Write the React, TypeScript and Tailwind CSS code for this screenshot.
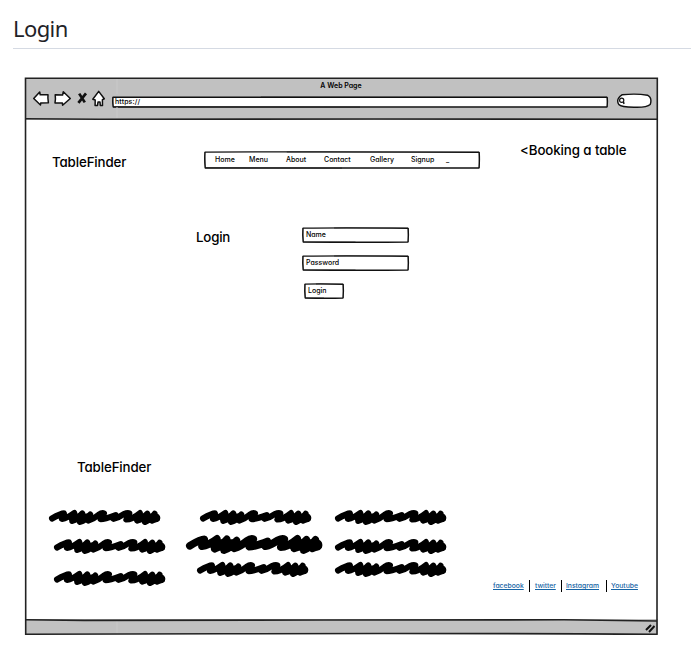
import type { ReactNode } from "react";

function SketchBox({ className, w, h, children }: { className: string; w: number; h: number; children?: ReactNode }) {
  return (
    <div className={`relative shrink-0 ${className}`}>
      <svg className="absolute inset-0 h-full w-full overflow-visible" viewBox={`0 0 ${w} ${h}`} fill="#fff" stroke="#111" strokeLinejoin="round">
        <path strokeWidth="1.3" d={`M1 1.2 Q${w * 0.4} .5 ${w - 0.8} 1.3 Q${w - 0.2} ${h / 2} ${w - 1} ${h - 1} Q${w * 0.6} ${h - 0.5} 1.2 ${h - 1} Q.3 ${h / 2} 1 1.2Z`} />
        <path fill="none" strokeWidth=".7" d={`M.8 1 L1.3 ${h - 1.2} L${w * 0.5} ${h - 0.9} M${w * 0.3} 1 L${w - 1} .9 L${w - 0.7} ${h - 1}`} />
      </svg>
      <div className="relative flex h-full items-center">{children}</div>
    </div>
  );
}

function Scribble({ className }: { className: string }) {
  return (
    <svg className={`block shrink-0 overflow-visible ${className}`} viewBox="87 180 333 44" preserveAspectRatio="none" fill="none" stroke="#000" strokeWidth="18" strokeLinecap="round" strokeLinejoin="round">
      <path d="M96 205 Q122 190 132 190 Q133 193 126 206 Q142 204 163 189 L157 212 Q170 208 187 190 L180 215 Q196 210 211 193 L205 211 Q222 206 236 194 Q246 187 252 190 L242 207 Q254 207 287 195 L281 206 Q296 203 312 192 Q323 187 328 190 L319 208 Q336 208 360 189 L352 211 Q366 207 382 191 L375 215 Q389 211 404 191 L396 211 L411 205" />
      <path d="M158 203H209M352 203H408" strokeWidth="26" />
    </svg>
  );
}

const navItems = [
  { label: "Home", box: "w-[34px]" },
  { label: "Menu", box: "w-[37px]" },
  { label: "About", box: "w-[38px]" },
  { label: "Contact", box: "w-[46px]" },
  { label: "Gallery", box: "w-[41px]" },
  { label: "Signup", box: "w-[35px]" },
  { label: "_", box: "w-[8px]" },
];

function Toolbar() {
  return (
    <div className="h-[42px] bg-[#c1c1c1] pt-[4px]">
      <div className="pr-px text-center text-[7px] leading-[7px] font-semibold">A Web Page</div>
      <div className="flex h-[20px] items-center pl-[7px]">
        <svg className="h-[20px] w-[76px] shrink-0" viewBox="32 89 76 20" fill="#fff" stroke="#111" strokeWidth="1.5" strokeLinejoin="round">
          <path d="M33.7 98.5 39.7 92 40.2 94.8 48 94.7 Q47.6 98 48.4 102.8 L40.7 103 40.5 105Z" />
          <path d="M70.3 98.5 63.3 91.7 62.6 95 55.2 94.8 Q55.8 99 55 102.9 L62.4 103.1 62.6 105.2Z" />
          <path d="M98.7 91.4 92.8 99.2 95.2 100 95.1 105.4 97.5 105.5 98 102 100 102 100.3 105.5 102.5 105.4 102.4 99.7 104.3 98.8Z" />
          <path d="M79.2 93.6 84.8 102.4M86 93.3 78.4 102.8" fill="none" strokeWidth="2.7" />
        </svg>
        <SketchBox className="mt-[5px] ml-[4px] h-[12px] w-[496px]" w={496} h={12}>
          <span className="pt-px pl-[3px] text-[7px] leading-[8px] font-medium tracking-[0.12px]">https://</span>
        </SketchBox>
        <svg className="mt-[3px] ml-[8px] h-[15px] w-[36px] shrink-0" viewBox="616 93 36 15" fill="#fff" stroke="#111" strokeWidth="1.4">
          <path d="M622 94.8 Q636 93.2 647.5 95.2 Q652.5 98 650.2 104.5 Q647 107.5 635 107.2 Q621 107.3 618.8 104.5 Q615.5 99 622 94.8Z" />
          <circle cx="621.7" cy="100.2" r="2.1" strokeWidth="1.2" />
          <path d="m623.3 101.9.8 2" strokeWidth="1.5" />
        </svg>
      </div>
    </div>
  );
}

function Field({ label, className, w, h }: { label: string; className: string; w: number; h: number }) {
  return (
    <SketchBox className={className} w={w} h={h}>
      <span className="pl-[4px] text-[7px] leading-[8px] font-medium">{label}</span>
    </SketchBox>
  );
}

export default function App() {
  return (
    <div className="h-[667px] w-[691px] overflow-hidden bg-white text-black">
      <h2 className="ml-[13px] h-[49px] border-b border-[#d5dae3] pt-[12px] font-['Noto_Sans',sans-serif] text-[22px] leading-[32px] tracking-[-0.6px] text-[#1f2328]">Login</h2>
      <main className="relative mt-[28px] ml-[24px] flex h-[558px] w-[635px] flex-col p-px font-[Inter,sans-serif] [font-feature-settings:'cv11']">
        <Toolbar />
        <div className="flex h-[108px] items-start pt-[22px] pl-[27px]">
          <div className="mt-[12px] w-[152px] text-[13.3px] leading-[16px] font-medium tracking-[-0.12px]">TableFinder</div>
          <SketchBox className="mt-[9px] h-[18px] w-[276px]" w={276} h={18}>
            <nav className="flex pl-[11px] text-[7px] leading-[8px] font-medium">
              {navItems.map((item) => (
                <span key={item.label} className={`${item.box} shrink-0`}>{item.label}</span>
              ))}
            </nav>
          </SketchBox>
          <div className="ml-[40px] text-[13.3px] leading-[16px] font-medium tracking-[-0.1px] whitespace-nowrap">&lt;Booking a table</div>
        </div>
        <div className="flex h-[231px] pl-[171px]">
          <div className="mt-[1px] w-[106px] text-[13.3px] leading-[16px] font-medium tracking-[-0.2px]">Login</div>
          <div className="flex flex-col">
            <Field label="Name" className="-mt-[1px] h-[16px] w-[107px]" w={107} h={16} />
            <Field label="Password" className="mt-[12px] h-[16px] w-[107px]" w={107} h={16} />
            <Field label="Login" className="mt-[12px] ml-[2px] h-[16px] w-[40px]" w={40} h={16} />
          </div>
        </div>
        <div className="h-[51px] pl-[52px] text-[13.3px] leading-[16px] font-medium tracking-[-0.12px]">TableFinder</div>
        <footer className="flex h-[109px] pl-[24px]">
          <div className="w-[137px]">
            <Scribble className="h-[15px] w-[111px]" />
            <Scribble className="mt-[14px] ml-[5px] h-[15px] w-[111px]" />
            <Scribble className="mt-[17px] ml-[5px] h-[15px] w-[111px]" />
          </div>
          <div className="w-[149px]">
            <Scribble className="ml-[14px] h-[15px] w-[111px]" />
            <Scribble className="mt-[10px] h-[19px] w-[136px]" />
            <Scribble className="mt-[8px] ml-[11px] h-[15px] w-[111px]" />
          </div>
          <div className="w-[158px]">
            <Scribble className="h-[15px] w-[111px]" />
            <Scribble className="mt-[14px] h-[15px] w-[111px]" />
            <Scribble className="mt-[8px] h-[15px] w-[111px]" />
          </div>
          <div className="mt-[70px] flex h-[12px] items-center text-[6.8px] leading-[8px] font-medium text-[#1664a5]">
            <a className="w-[36px] underline">facebook</a>
            <i className="mr-[5px] h-[12px] w-px bg-black" />
            <a className="w-[26px] underline">twitter</a>
            <i className="mr-[4px] h-[12px] w-px bg-black" />
            <a className="w-[40px] underline">Instagram</a>
            <i className="mr-[4px] h-[12px] w-px bg-black" />
            <a className="underline">Youtube</a>
          </div>
        </footer>
        <div className="flex h-[15px] items-center justify-end bg-[#c1c1c1] pr-[3px]">
          <svg className="mt-[3px] h-[9px] w-[10px]" viewBox="0 0 10 9" fill="none" stroke="#111" strokeWidth="2">
            <path d="m1 6 5-5M4 8l5.5-6" />
          </svg>
        </div>
        <svg className="pointer-events-none absolute inset-0 h-full w-full" viewBox="0 0 635 558" fill="none" stroke="#222" strokeWidth="1.6">
          <path d="M93 2V17M93 30V41M93 544V556" stroke="#c9c9c9" strokeWidth="1" />
          <path d="M1.5 1.2H633.3L633 557.2Q390 556 200 556.8T1.7 557.2Z" />
          <path d="M1.5 41.7 75 42.3 350 42 633 42.3M1.5 542.8 60 543.4 300 543 540 542.8 633 544" />
        </svg>
      </main>
    </div>
  );
}
